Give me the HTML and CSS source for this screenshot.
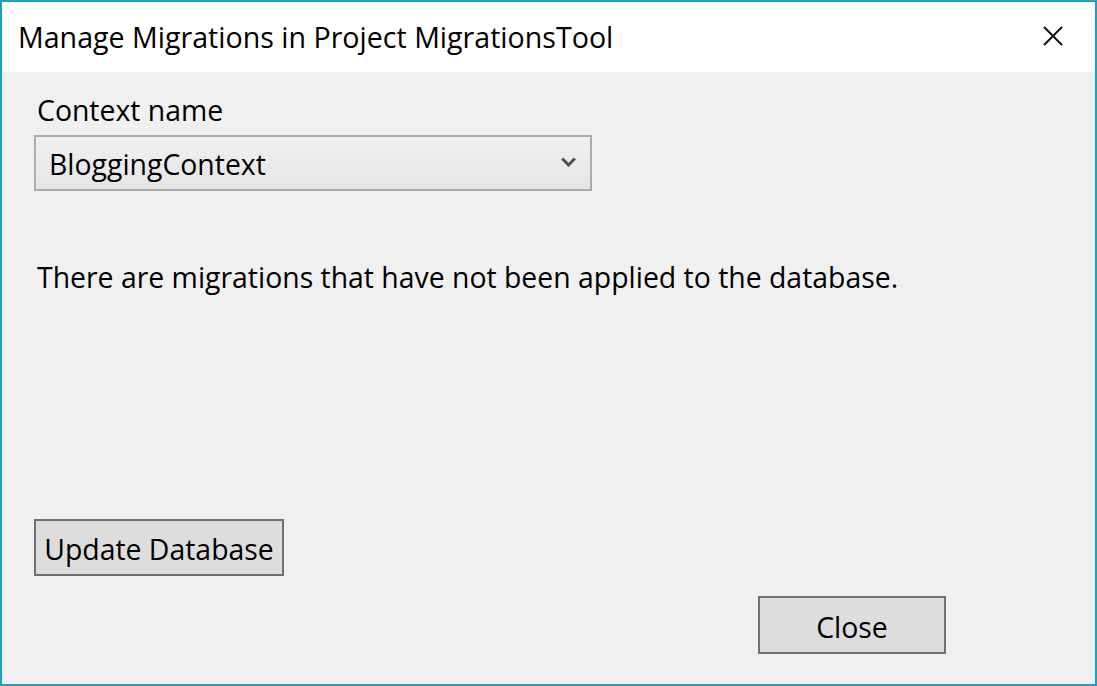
FILE: index.html
```html
<!DOCTYPE html>
<html>
<head>
<meta charset="utf-8">
<link rel="stylesheet" href="styles.css">
</head>
<body>
<div class="window">
  <div class="titlebar">
    <span class="title">Manage Migrations in Project MigrationsTool</span>
    <span class="close-x">
      <svg width="20" height="20" viewBox="0 0 20 20"><path d="M1 1 L19 19 M19 1 L1 19" stroke="#111" stroke-width="2" fill="none"/></svg>
    </span>
  </div>
  <div class="content">
    <div class="label">Context name</div>
    <div class="combo">
      <span class="combo-text">BloggingContext</span>
      <svg class="chev" width="15" height="10" viewBox="0 0 15 10"><path d="M1.2 1.5 L7.5 8 L13.8 1.5" stroke="#505050" stroke-width="3" fill="none"/></svg>
    </div>
    <div class="message">There are migrations that have not been applied to the database.</div>
    <div class="spacer"></div>
    <div class="btn update">Update Database</div>
    <div class="bottom-row">
      <div class="btn close">Close</div>
    </div>
  </div>
</div>
</body>
</html>
```
FILE: styles.css
```css
html, body {
  margin: 0;
  padding: 0;
}
body {
  font-family: "Open Sans", "Noto Sans", sans-serif;
  color: #000;
}
.window {
  width: 1097px;
  height: 686px;
  box-sizing: border-box;
  border: 2px solid #1aa1c2;
  display: flex;
  flex-direction: column;
  background: #f0f0f0;
}
.titlebar {
  height: 70px;
  background: #ffffff;
  display: flex;
  align-items: center;
  justify-content: space-between;
  padding-left: 16px;
  padding-right: 32px;
  flex-shrink: 0;
}
.title {
  font-size: 28.6px;
  line-height: 40px;
  margin-top: 0;
}
.close-x {
  display: flex;
  width: 20px;
  height: 20px;
  margin-top: -2px;
}
.content {
  flex: 1;
  display: flex;
  flex-direction: column;
  padding: 18px 0 30px 32px;
  align-items: flex-start;
}
.label {
  font-size: 28.4px;
  line-height: 40px;
  margin-left: 3px;
}
.combo {
  margin-top: 5px;
  width: 558px;
  height: 56px;
  box-sizing: border-box;
  border: 2px solid #acacac;
  background: linear-gradient(#f0f0f0, #e5e5e5);
  display: flex;
  align-items: center;
  justify-content: space-between;
  padding: 0 14px 0 13px;
}
.combo-text {
  font-size: 28.4px;
  line-height: 40px;
  margin-top: 2px;
}
.chev {
  margin-top: -3px;
}
.message {
  margin-top: 66px;
  font-size: 28.4px;
  line-height: 40px;
  margin-left: 3px;
}
.spacer {
  flex: 1;
}
.btn {
  box-sizing: border-box;
  border: 2px solid #707070;
  background: #dddddd;
  font-size: 28.4px;
  display: flex;
  align-items: center;
  justify-content: center;
  padding-top: 3px;
}
.update {
  width: 250px;
  height: 57px;
}
.bottom-row {
  align-self: stretch;
  display: flex;
  justify-content: flex-end;
  margin-top: 20px;
  padding-right: 149px;
}
.close {
  width: 188px;
  height: 58px;
}
```
